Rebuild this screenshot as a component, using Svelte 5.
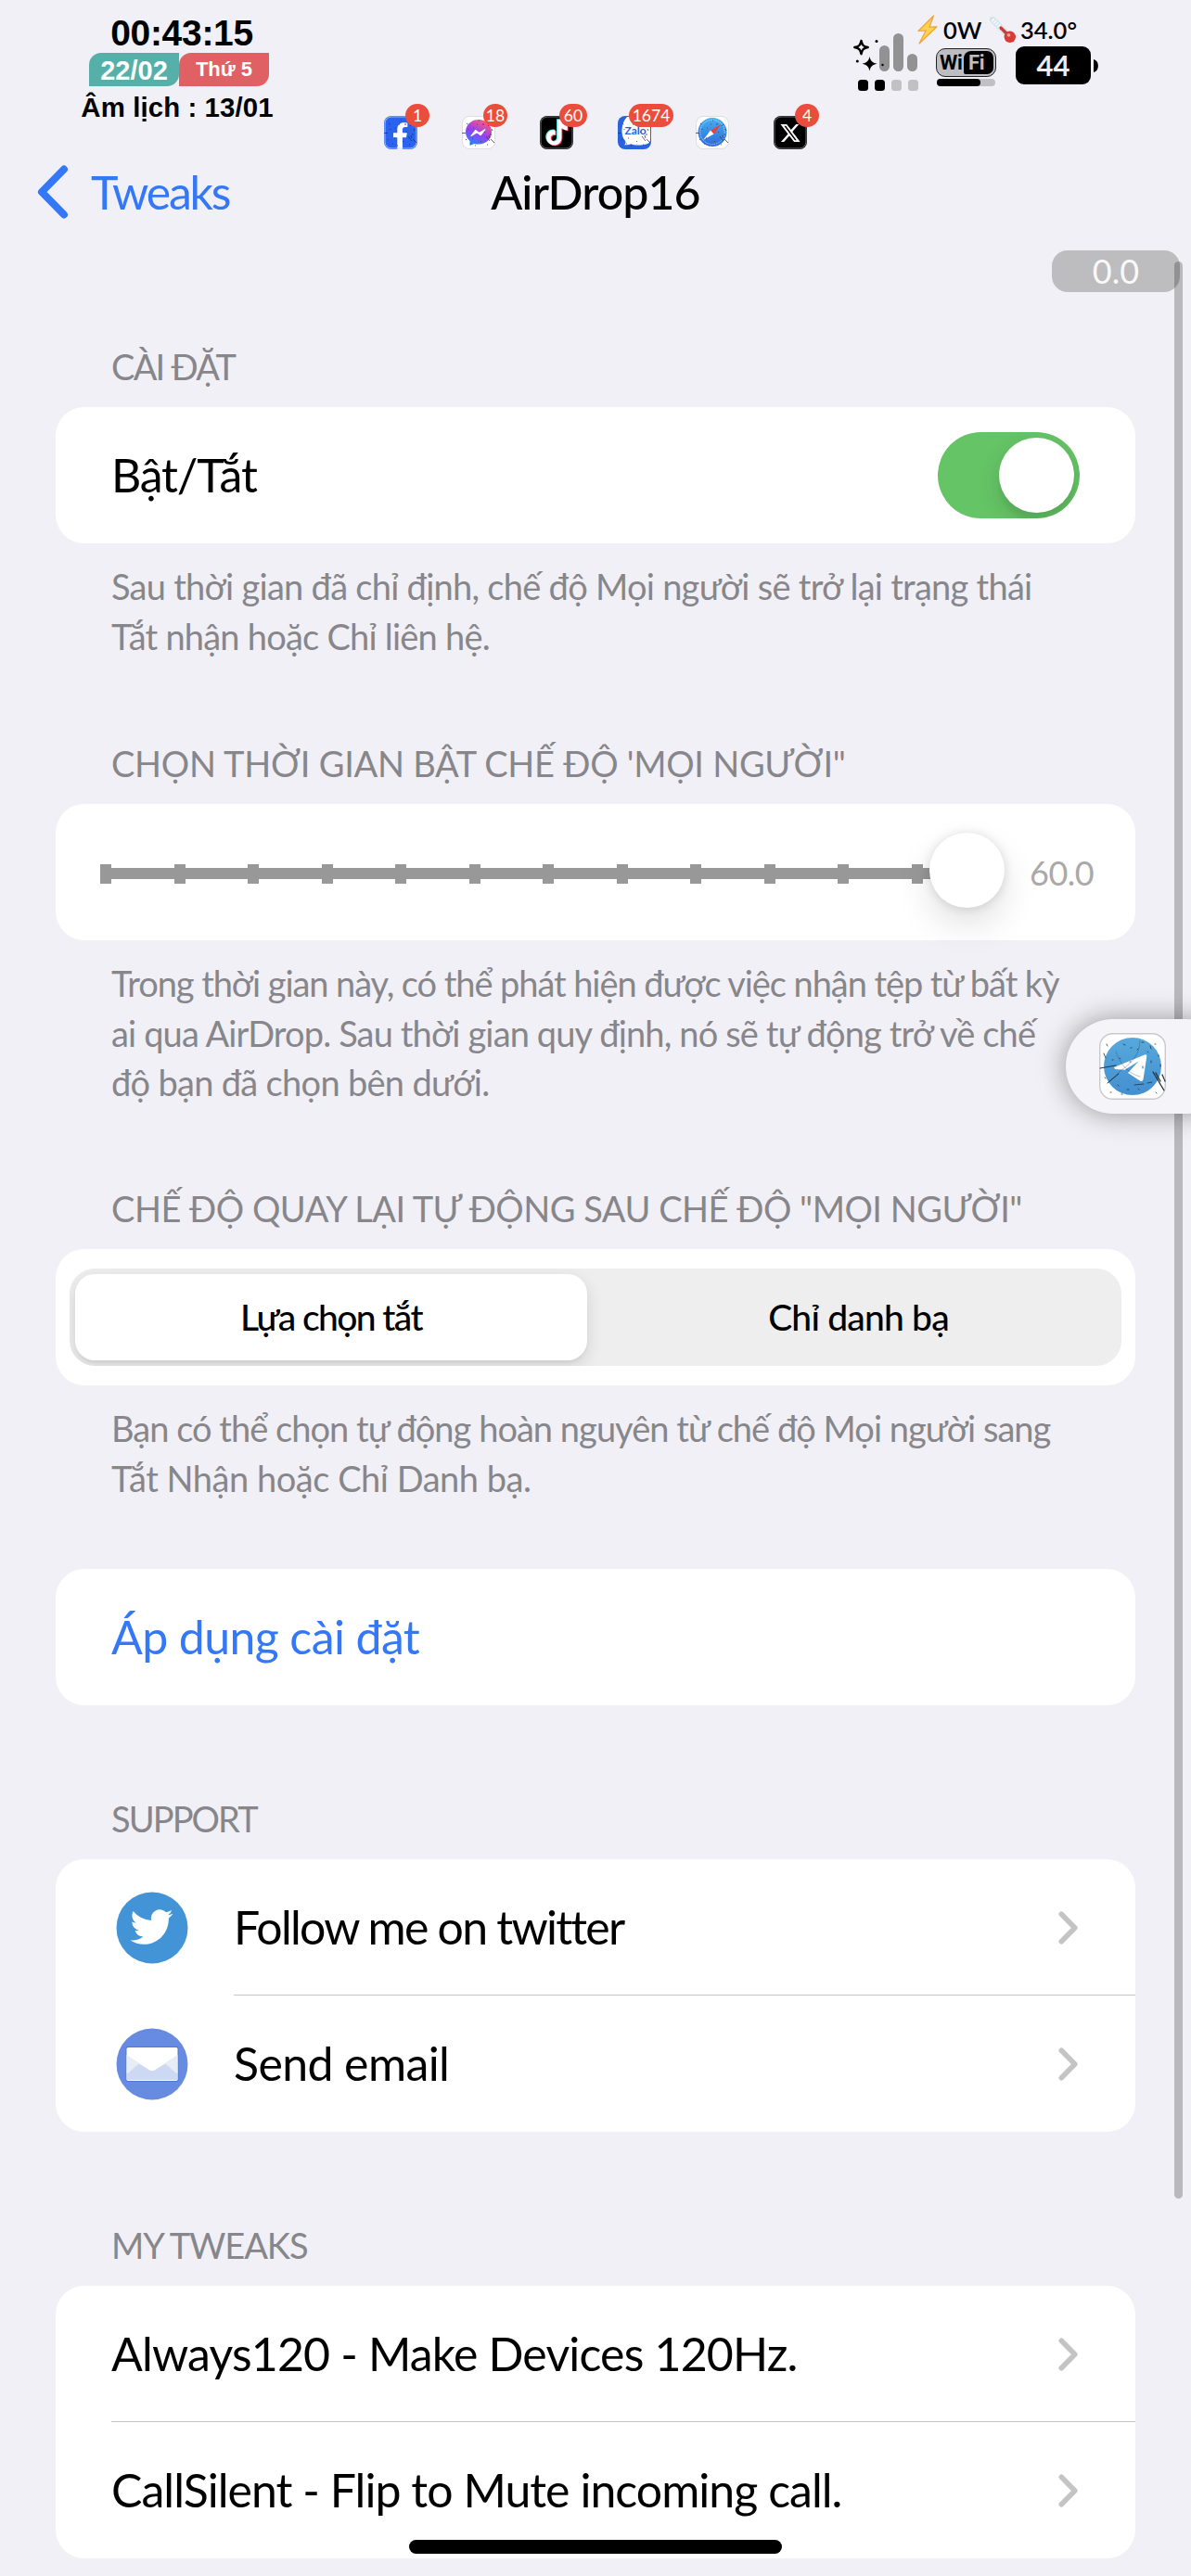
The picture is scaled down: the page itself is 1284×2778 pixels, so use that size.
<script>
  const badgeApps = [
    { id: 'facebook', count: '1', left: 23, width: 26 },
    { id: 'messenger', count: '18', left: 23, width: 26 },
    { id: 'tiktok', count: '60', left: 21, width: 30 },
    { id: 'zalo', count: '1674', left: 12, width: 48 },
    { id: 'safari', count: '' },
    { id: 'x', count: '4', left: 23, width: 26 }
  ];

  // Worn-paint specks shared by the themed app icons, on a 36-unit grid.
  const specks =
    'M0 18.5h4M5 8l1.5 1M26 22l4 5M29 21l1 3M31 25l4 4M9 30h1M23 8v2M12 13h1M27 31h1M4 25l1 1M18 5h1M20 27l1 1M32 14l1 2M14 32h1M7 14v1M28 11l2-2M31 19v2M16 9h1M24 17l1 1M11 24h1';

  // TikTok note, drawn three times with colour offsets.
  const note =
    'M12.525.02h3.91c.08 1.53.63 3.09 1.75 4.17 1.12 1.11 2.7 1.62 4.24 1.79v4.03c-2.2-.1-4.2-.8-5.82-1.9v8.75c-.08 4.2-3.4 7.1-7.26 7.15C5 24 1.7 21 1.6 16.8c.1-4.6 4.2-7.7 8.73-6.9v4.44c-2.4-.7-4.5.8-4.52 3.23.24 1.64 1.82 3.02 3.5 2.87 1.9-.1 3.18-1.3 3.18-3z';

  const ticks = Array.from({ length: 13 }, (_, i) => i);

  const autoFooter = [
    { text: 'Sau thời gian đã chỉ định, chế độ Mọi người sẽ trở lại trạng thái', tracking: -0.73 },
    { text: 'Tắt nhận hoặc Chỉ liên hệ.', tracking: -0.77 }
  ];
  const timeFooter = [
    { text: 'Trong thời gian này, có thể phát hiện được việc nhận tệp từ bất kỳ', tracking: -1.07 },
    { text: 'ai qua AirDrop. Sau thời gian quy định, nó sẽ tự động trở về chế', tracking: -0.86 },
    { text: 'độ bạn đã chọn bên dưới.', tracking: -0.7 }
  ];
  const modeFooter = [
    { text: 'Bạn có thể chọn tự động hoàn nguyên từ chế độ Mọi người sang', tracking: -0.97 },
    { text: 'Tắt Nhận hoặc Chỉ Danh bạ.', tracking: -0.47 }
  ];
  const tweaks = [
    { text: 'Always120 - Make Devices 120Hz.', tracking: -0.83 },
    { text: 'CallSilent - Flip to Mute incoming call.', tracking: -0.97 }
  ];
</script>

{#snippet heading(text, tracking)}
  <h2 style:letter-spacing="{tracking}px">{text}</h2>
{/snippet}

{#snippet footer(lines)}
  <p class="footer">
    {#each lines as line}
      <span style:letter-spacing="{line.tracking}px">{line.text}</span>
    {/each}
  </p>
{/snippet}

{#snippet label(text, tracking)}
  <span class="label" style:letter-spacing="{tracking}px">{text}</span>
{/snippet}

{#snippet chevron()}
  <svg class="chevron" viewBox="0 0 22 36" width="22" height="36"><path d="M3.3 3.3 17.8 18 3.3 32.7" /></svg>
{/snippet}

<div class="screen">
  <header class="status">
    <div class="clock">
      <div class="time">00:43:15</div>
      <div class="chips">
        <span class="chip date">22/02</span>
        <span class="chip weekday">Thứ 5</span>
      </div>
      <div class="lunar">Âm lịch : 13/01</div>
    </div>

    <div class="apps">
      {#each badgeApps as app}
        <div class="app">
          <svg viewBox="0 0 36 36" width="36" height="36">
            {#if app.id === 'facebook'}
              <rect width="36" height="36" rx="8" fill="#2a63f0" />
              <path d="M14.3 36V23.2H10v-5h4.3v-3.6c0-4.8 2.8-7.4 7.2-7.4 1.5 0 3 .2 3.8.4v4.5h-2.4c-2.3 0-3 1.4-3 2.8v3.3h4.9l-.8 5h-4.1V36z" fill="#fff" />
              <rect x="1" y="1" width="34" height="34" rx="7" fill="none" stroke="#bcd0ff" stroke-width=".8" />
              <path d={specks} class="specks light" />
            {:else if app.id === 'messenger'}
              <defs>
                <linearGradient id="msg" x1=".2" y1="1" x2=".7" y2="0">
                  <stop offset="0" stop-color="#1b8cff" /><stop offset=".5" stop-color="#9a3df5" /><stop offset="1" stop-color="#ff5b78" />
                </linearGradient>
              </defs>
              <rect x=".4" y=".4" width="35.2" height="35.2" rx="8" fill="#fff" stroke="#d4d4d8" stroke-width=".8" />
              <path d="M18 4C10 4 4 9.7 4 17.3c0 4 1.7 7.4 4.5 9.8v5l4.6-2.2c1.5.5 3.200.7 4.9.7 8 0 14-5.7 14-13.300S26 4 18 4z" fill="url(#msg)" />
              <path d="M10 21.5l4.6-6 3.9 3 6.4-3.8-4.7 6-4-3z" fill="#fff" stroke="#fff" stroke-width="1.2" stroke-linejoin="round" />
              <path d={specks} class="specks" />
            {:else if app.id === 'tiktok'}
              <rect width="36" height="36" rx="8" fill="#000" />
              <g transform="translate(5.5 4) scale(1.08 1.15)">
                <path transform="translate(-.9 -.7)" fill="#5ee7e3" d={note} />
                <path transform="translate(.9 .7)" fill="#ee3a5c" d={note} />
                <path fill="#fff" d={note} />
              </g>
              <rect x="1" y="1" width="34" height="34" rx="7" fill="none" stroke="#8a8a8a" stroke-width=".8" />
            {:else if app.id === 'zalo'}
              <rect width="36" height="36" rx="8" fill="#2a63e0" />
              <path d="M10 1h18a7 7 0 0 1 7 7v18c0 3-3 4.5-7 5-5 1-11 .5-14-.8-2 1-4 1.3-7 1 1.8-1.5 1.8-3 1-4.5C3 22 3 8 10 1z" fill="#fff" />
              <text x="7.5" y="20" class="zalo">Zalo</text>
              <path d={specks} class="specks" />
            {:else if app.id === 'safari'}
              <defs>
                <linearGradient id="saf" x1="0" y1="0" x2="0" y2="1">
                  <stop offset="0" stop-color="#45b0f2" /><stop offset="1" stop-color="#3069dc" />
                </linearGradient>
              </defs>
              <rect x=".4" y=".4" width="35.2" height="35.2" rx="8" fill="#fff" stroke="#d4d4d8" stroke-width=".8" />
              <circle cx="18" cy="17.5" r="15.5" fill="url(#saf)" />
              <circle cx="18" cy="17.5" r="13.2" fill="none" stroke="#d5ecff" stroke-width=".7" stroke-dasharray="1.5 1" />
              <path d="M27.5 9 16 15.5l3.5 4z" fill="#ea4335" />
              <path d="M8 26l8-10.5 3.5 4z" fill="#fff" />
              <path d={specks} class="specks" />
            {:else}
              <rect width="36" height="36" rx="8" fill="#000" />
              <path transform="translate(7.5 8) scale(.88)" fill="#fff" d="M18.901 1.153h3.68l-8.04 9.19L24 22.846h-7.406l-5.8-7.584-6.638 7.584H.474l8.6-9.83L0 1.154h7.594l5.243 6.932ZM17.61 20.644h2.039L6.486 3.24H4.298Z" />
              <rect x="1" y="1" width="34" height="34" rx="7" fill="none" stroke="#8a8a8a" stroke-width=".8" />
            {/if}
          </svg>
          {#if app.count}
            <span class="badge" style:left="{app.left}px" style:width="{app.width}px">{app.count}</span>
          {/if}
        </div>
      {/each}
    </div>

    <div class="signals">
      <svg class="cell" viewBox="0 0 74 68" width="74" height="68">
        <g fill="#929294">
          <rect x="30" y="19" width="11" height="28" rx="5.5" />
          <rect x="45" y="6" width="11" height="41" rx="5.5" />
          <rect x="60" y="28" width="11" height="19" rx="5.5" />
        </g>
        <path d="M10.500 14c1 4.800 2.400 6.200 7.200 7-4.800 1-6.200 2.400-7.200 7.200-1-4.800-2.400-6.200-7.200-7.200 4.800-.8 6.200-2.200 7.200-7z" fill="none" stroke="#000" stroke-width="2.4" stroke-linejoin="round" />
        <path d="M19.500 31c1.200 5 2.800 6.500 8 7.700-5.200 1.200-6.800 2.700-8 7.700-1.200-5-2.800-6.500-8-7.700 5.200-1.200 6.800-2.700 8-7.700z" />
        <circle cx="27" cy="14.5" r="1.5" /><circle cx="6.3" cy="36" r="1.5" /><circle cx="33.5" cy="40" r="1.2" />
        <rect x="7" y="56" width="11" height="12" rx="3.5" />
        <rect x="25" y="56" width="11" height="12" rx="3.5" />
        <rect x="43" y="56" width="11" height="12" rx="3.5" fill="#c0c0c5" />
        <rect x="61" y="56" width="11" height="12" rx="3.5" fill="#c0c0c5" />
      </svg>
      <div class="readings">
        <div class="power">
          <svg viewBox="0 0 22 32" width="22" height="32">
            <path d="M17.500 1 1 17.500l8.200-.5L2 31l19-18.200-8 .4z" fill="#fbd34d" stroke="#f0a23c" stroke-width="1.2" stroke-linejoin="round" />
          </svg>
          <span class="watts">0W</span>
          <svg viewBox="0 0 29 29" width="29" height="29">
            <path d="M3 3l14 14" stroke="#d3e2e8" stroke-width="6.5" stroke-linecap="round" />
            <path d="M3 3l12 12" stroke="#f6fbfc" stroke-width="4.4" stroke-linecap="butt" stroke-dasharray="1.6 1.4" />
            <path d="M12 12l9 9" stroke="#cb3a36" stroke-width="3.2" stroke-linecap="round" />
            <circle cx="21.8" cy="21.8" r="6.2" fill="#d93b36" />
            <circle cx="20.5" cy="19.8" r="1.9" fill="#f29b93" />
          </svg>
          <span class="degrees">34.0°</span>
        </div>
        <div class="meters">
          <div class="wifi">
            <div class="wifi-logo"><span class="wi">Wi</span><span class="fi">Fi</span></div>
            <div class="wifi-bar"><i></i></div>
          </div>
          <div class="battery">44</div>
          <svg class="tip" viewBox="0 0 5 14" width="5" height="14"><path d="M0 0c6.500 1.500 6.500 12.500 0 14z" /></svg>
        </div>
      </div>
    </div>
  </header>

  <nav>
    <div class="back">
      <svg viewBox="0 0 34 58" width="34" height="58"><path d="M29 4.500 5 29l24 24.500" /></svg>
      <span>Tweaks</span>
    </div>
    <h1>AirDrop16</h1>
  </nav>

  <main>
    <section>
      {@render heading('CÀI ĐẶT', -1.75)}
      <div class="card">
        <div class="row">
          {@render label('Bật/Tắt', -1.2)}
          <div class="switch"><i></i></div>
        </div>
      </div>
      {@render footer(autoFooter)}
    </section>

    <section class="time-section">
      {@render heading('CHỌN THỜI GIAN BẬT CHẾ ĐỘ \'MỌI NGƯỜI"', -0.28)}
      <div class="card">
        <div class="row slider-row">
          <div class="slider">
            <div class="ticks">
              {#each ticks as tick (tick)}<i></i>{/each}
            </div>
            <b></b>
          </div>
          <span class="value">60.0</span>
        </div>
      </div>
      {@render footer(timeFooter)}
    </section>

    <section class="mode-section">
      {@render heading('CHẾ ĐỘ QUAY LẠI TỰ ĐỘNG SAU CHẾ ĐỘ "MỌI NGƯỜI"', -0.5)}
      <div class="card segmented">
        <div class="segments">
          <div class="segment on">Lựa chọn tắt</div>
          <div class="segment">Chỉ danh bạ</div>
        </div>
      </div>
      {@render footer(modeFooter)}
    </section>

    <section class="apply-section">
      <div class="card">
        <div class="row link">{@render label('Áp dụng cài đặt', -0.6)}</div>
      </div>
    </section>

    <section class="list-section">
      {@render heading('SUPPORT', -1.9)}
      <div class="card">
        <div class="row with-icon">
          <svg viewBox="0 0 78 78" width="78" height="78">
            <circle cx="39" cy="39" r="38.5" fill="#4394d6" />
            <path transform="translate(15.5 15) scale(1.917)" fill="#fff" d="M23.953 4.57a10 10 0 01-2.825.775 4.958 4.958 0 002.163-2.723c-.951.555-2.005.959-3.127 1.184a4.92 4.92 0 00-8.384 4.482C7.69 8.095 4.067 6.13 1.64 3.162a4.822 4.822 0 00-.666 2.475c0 1.71.87 3.213 2.188 4.096a4.904 4.904 0 01-2.228-.616v.06a4.923 4.923 0 003.946 4.827 4.996 4.996 0 01-2.212.085 4.936 4.936 0 004.604 3.417 9.867 9.867 0 01-6.102 2.105c-.39 0-.779-.023-1.17-.067a13.995 13.995 0 007.557 2.209c9.053 0 13.998-7.496 13.998-13.985 0-.21 0-.42-.015-.63A9.935 9.935 0 0024 4.59z" />
          </svg>
          {@render label('Follow me on twitter', -1.78)}
          {@render chevron()}
        </div>
        <div class="row with-icon">
          <svg viewBox="0 0 78 78" width="78" height="78">
            <circle cx="39" cy="39" r="38.5" fill="#688be2" />
            <rect x="10.5" y="20" width="57" height="38" rx="2" fill="#5276d2" />
            <rect x="11.5" y="21" width="55" height="36" rx="1.5" fill="#fff" />
            <path d="M11.500 29 26 38.500 11.500 49zM66.500 29 52 38.500 66.500 49z" fill="#e8ecf5" />
            <path d="M11.500 49.500 25 38.500l11 6.800q3 1.700 6 0l11-6.800 13.500 11V56h-55z" fill="#cdd9f2" />
          </svg>
          {@render label('Send email', -0.6)}
          {@render chevron()}
        </div>
      </div>
    </section>

    <section class="list-section">
      {@render heading('MY TWEAKS', -1.1)}
      <div class="card">
        {#each tweaks as tweak}
          <div class="row">
            {@render label(tweak.text, tweak.tracking)}
            {@render chevron()}
          </div>
        {/each}
      </div>
    </section>
  </main>

  <div class="speed">0.0</div>
  <div class="scrollbar"></div>

  <div class="floating">
    <svg viewBox="0 0 72 72" width="72" height="72">
      <defs>
        <linearGradient id="tg" x1="0" y1="0" x2="0" y2="1">
          <stop offset="0" stop-color="#56a9dc" /><stop offset="1" stop-color="#458fd0" />
        </linearGradient>
      </defs>
      <rect x=".7" y=".7" width="70.6" height="70.6" rx="14" fill="#fff" stroke="#c9c9cd" stroke-width="1.4" />
      <circle cx="36" cy="36" r="31" fill="url(#tg)" />
      <path d="M16 37 49 23.500c1.600-.5 2.500.4 2.200 2.200L47.500 50c-.4 2-2 2.500-3.600 1.500L31 43l11.500-12.500L27.500 39.800 17 39z" fill="#fff" />
      <g fill="none" stroke="#26323c" stroke-linecap="round">
        <path d="M1 38l17-3M9 54l12-10" stroke-width="1" />
        <path d="M18 20c3 10 12 24 26 27M44 8c0 14-8 24-20 32l-14 13" stroke-width=".5" opacity=".6" />
        <path d="M58 42l12 20M61 43l5 9M68 45l3 7" stroke-width="1.3" stroke-dasharray="5 1" />
        <path d="M26 12l2 1M34 16h1M41 18l1-1M14 29h1M22 27l1 1M52 20l1 1M56 30v2M38 56l10-1M52 54l5-1M30 61h2M20 56l1 1M12 64h1M8 12l1 2M60 12h1M64 24v1M6 48l1 1M24 66h1M46 10h2M33 31h1M47 36v2M61 64l1 1M5 22l2 5M66 34v2M42 60l1 1M55 14l1 3" stroke-width=".8" />
      </g>
    </svg>
  </div>

  <div class="home"></div>
</div>

<style>
  :global(body) {
    margin: 0;
    background: #f1f0f6;
  }

  .screen {
    position: relative;
    width: 1284px;
    height: 2778px;
    overflow: hidden;
    background: #f1f0f6;
    color: #000;
    font-family: Lato, 'Noto Sans', sans-serif;
    font-size: 50px;
  }

  svg {
    display: block;
    flex: none;
  }

  /* Status bar */
  .status {
    display: flex;
    height: 163px;
  }

  .clock {
    display: flex;
    flex-direction: column;
    align-items: center;
    box-sizing: border-box;
    width: 208px;
    margin-left: 87px;
    padding-top: 15px;
    font-family: 'Liberation Sans', sans-serif;
    font-weight: 700;
    white-space: nowrap;
  }

  .time {
    margin-left: 10px;
    font-size: 39px;
    line-height: 42px;
    letter-spacing: -0.3px;
  }

  .chips {
    display: flex;
    margin-left: 4px;
  }

  .chip {
    width: 97px;
    height: 36px;
    border-radius: 13px 0;
    color: #fff;
    text-align: center;
  }

  .date {
    background: #56afa8;
    font-size: 29px;
    line-height: 38px;
  }

  .weekday {
    background: #df6163;
    font-size: 22px;
    line-height: 35px;
  }

  .lunar {
    margin-top: 5px;
    font-size: 29.4px;
    letter-spacing: 0.1px;
    line-height: 35px;
  }

  .apps {
    display: flex;
    gap: 48px;
    margin: 125px 0 0 119px;
    height: 36px;
  }

  .app {
    position: relative;
  }

  .badge {
    position: absolute;
    top: -13px;
    height: 25px;
    border-radius: 13px;
    background: #eb4d3d;
    color: #fff;
    font-size: 17.5px;
    line-height: 25px;
    text-align: center;
  }

  .specks {
    fill: none;
    stroke: #3c3c40;
    stroke-width: 0.8;
  }

  .specks.light {
    stroke: #16307a;
  }

  .zalo {
    font: 700 12px Lato, sans-serif;
    fill: #2a63e0;
  }

  .signals {
    display: flex;
    margin-left: 48px;
  }

  .cell {
    margin-top: 30px;
  }

  .readings {
    padding-top: 15px;
  }

  .power {
    display: flex;
    align-items: center;
    height: 34px;
    margin-left: -3px;
    font-size: 25.5px;
    font-weight: 600;
    line-height: 34px;
  }

  .watts {
    width: 50px;
    margin-left: 6px;
  }

  .degrees {
    margin-left: 4px;
  }

  .meters {
    display: flex;
    align-items: flex-start;
    margin: 1px 0 0 17px;
  }

  .wifi {
    width: 65px;
    margin-top: 2px;
  }

  .wifi-logo {
    display: flex;
    box-sizing: border-box;
    height: 31px;
    padding: 2px;
    border: 1.5px solid #222;
    border-radius: 10px;
    background: #bdbdc2;
    font: 700 22px/26px Roboto, sans-serif;
    letter-spacing: -0.3px;
  }

  .wi {
    width: 26px;
    padding-left: 1px;
  }

  .fi {
    flex: 1;
    padding-left: 5px;
    border-radius: 8px 7px 7px 2px;
    background: #000;
    color: #bdbdc2;
    line-height: 25px;
  }

  .wifi-bar {
    height: 8px;
    margin: 2px 1px 0;
    border-radius: 4px;
    background: #c0c0c5;
  }

  .wifi-bar i {
    display: block;
    width: 47px;
    height: 8px;
    border-radius: 4px;
    background: #000;
  }

  .battery {
    width: 81px;
    height: 41px;
    margin-left: 21px;
    border-radius: 9px;
    background: #000;
    color: #ededf0;
    font-size: 31px;
    font-weight: 700;
    line-height: 41px;
    text-align: center;
  }

  .tip {
    margin: 14px 0 0 3px;
  }

  /* Navigation bar */
  nav {
    display: grid;
    grid-template-columns: 1fr auto 1fr;
    align-items: center;
    height: 87px;
    line-height: 60px;
  }

  .back {
    display: flex;
    align-items: center;
    gap: 24px;
    padding-left: 40px;
    color: #3478f7;
    letter-spacing: -2.2px;
  }

  .back span {
    padding-top: 1px;
  }

  .back path {
    fill: none;
    stroke: #3478f7;
    stroke-width: 8;
    stroke-linecap: round;
    stroke-linejoin: round;
  }

  h1 {
    margin: 0;
    padding-top: 1px;
    font-size: 50px;
    font-weight: 500;
    letter-spacing: -0.9px;
  }

  /* Settings list */
  main {
    padding: 117px 60px 0;
  }

  h2 {
    margin: 0;
    padding: 1px 60px 17px;
    color: #87868b;
    font-size: 38px;
    font-weight: 400;
    line-height: 54px;
    white-space: nowrap;
  }

  .card {
    border-radius: 31px;
    background: #fff;
  }

  .row {
    display: flex;
    align-items: center;
    justify-content: space-between;
    position: relative;
    box-sizing: border-box;
    height: 147px;
    padding: 0 61px 0 60px;
  }

  .row + .row::before {
    content: '';
    position: absolute;
    top: -1px;
    right: 0;
    left: 60px;
    height: 1px;
    background: #c6c6c8;
  }

  .row.with-icon + .row::before {
    left: 192px;
  }

  .label {
    padding-bottom: 1px;
    line-height: 60px;
    white-space: nowrap;
  }

  .link {
    color: #3478f7;
  }

  .with-icon {
    padding-left: 65px;
  }

  .with-icon .label {
    flex: 1;
    padding-left: 49px;
  }

  .chevron path {
    fill: none;
    stroke: #c4c4c7;
    stroke-width: 5.6;
    stroke-linecap: round;
    stroke-linejoin: round;
  }

  .footer {
    margin: 0;
    padding: 20px 60px 0;
    color: #87868b;
    font-size: 38px;
    line-height: 53.5px;
  }

  .footer span {
    display: block;
    white-space: nowrap;
  }

  .time-section {
    padding-top: 82px;
  }

  .mode-section {
    padding-top: 80.5px;
  }

  .apply-section {
    padding-top: 71px;
  }

  .list-section {
    padding-top: 94px;
  }

  .switch {
    box-sizing: border-box;
    width: 153px;
    height: 93px;
    margin-right: -1px;
    padding: 6px;
    border-radius: 47px;
    background: #65c466;
    overflow: hidden;
  }

  .switch i {
    display: block;
    width: 81px;
    height: 81px;
    margin-left: auto;
    border-radius: 50%;
    background: #fff;
    box-shadow: 0 9px 24px rgba(0, 0, 0, 0.15), 0 9px 3px rgba(0, 0, 0, 0.03);
  }

  .slider-row {
    justify-content: flex-start;
    padding: 0 45px 0 48px;
  }

  .slider {
    display: flex;
    align-items: center;
    width: 975px;
    height: 81px;
    margin-top: -4px;
  }

  .ticks {
    display: flex;
    align-items: center;
    justify-content: space-between;
    width: 966px;
    height: 21px;
    margin: 8px -72px 0 0;
    background: linear-gradient(#989898, #989898) 0 4px / 920px 12px no-repeat;
  }

  .ticks i {
    width: 12px;
    height: 21px;
    background: #989898;
  }

  .ticks i:last-child {
    visibility: hidden;
  }

  .slider b {
    flex: none;
    width: 81px;
    height: 81px;
    border-radius: 50%;
    background: #fff;
    box-shadow: 0 18px 39px rgba(0, 0, 0, 0.12), 0 1px 12px rgba(0, 0, 0, 0.13);
  }

  .value {
    margin-left: 27px;
    color: #a9a9a9;
    font-size: 36px;
    letter-spacing: -0.5px;
    line-height: 44px;
  }

  .segmented {
    box-sizing: border-box;
    height: 147px;
    padding: 21px 15px;
  }

  .segments {
    display: grid;
    grid-template-columns: 552px 1fr;
    box-sizing: border-box;
    height: 105px;
    padding: 6px;
    border-radius: 27px;
    background: #eee;
    overflow: hidden;
  }

  .segment {
    padding-left: 15px;
    font-size: 39px;
    font-weight: 500;
    letter-spacing: -0.8px;
    line-height: 93px;
    text-align: center;
  }

  .segment.on {
    padding: 0;
    border-radius: 21px;
    background: #fff;
    box-shadow: 0 6px 18px rgba(0, 0, 0, 0.12), 0 3px 3px rgba(0, 0, 0, 0.04);
    letter-spacing: -1.6px;
  }

  /* Overlays */
  .speed {
    position: absolute;
    top: 270px;
    left: 1134px;
    width: 138px;
    height: 45px;
    border-radius: 17px;
    background: #bdbdbf;
    color: #f9f9fa;
    font-size: 36px;
    line-height: 44px;
    text-align: center;
  }

  .scrollbar {
    position: absolute;
    top: 282px;
    left: 1266px;
    width: 9px;
    height: 2089px;
    border-radius: 5px;
    background: rgba(0, 0, 0, 0.23);
  }

  .floating {
    position: absolute;
    top: 1099px;
    left: 1149px;
    box-sizing: border-box;
    width: 180px;
    height: 102px;
    padding: 15px 36px;
    border-radius: 51px;
    background: #f4f4f9;
    box-shadow: 0 0 30px rgba(0, 0, 0, 0.38);
  }

  .home {
    position: absolute;
    top: 2739px;
    left: 441px;
    width: 402px;
    height: 15px;
    border-radius: 8px;
    background: #000;
  }
</style>
